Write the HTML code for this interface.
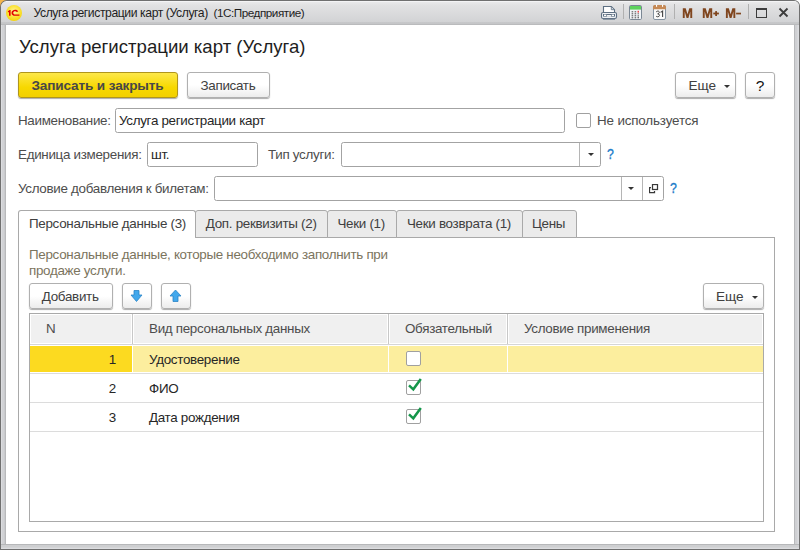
<!DOCTYPE html>
<html><head><meta charset="utf-8">
<style>
*{box-sizing:border-box;margin:0;padding:0}
html,body{width:800px;height:550px;overflow:hidden;background:#fff;font-family:"Liberation Sans",sans-serif;color:#4d4d4d}
div,span{position:absolute}
#corner{left:0;top:0;width:7px;height:7px;background:#f5b54a}
#win{left:0;top:0;width:800px;height:550px;background:#707070;border-radius:7px 6px 0 0}
#frame{left:1px;top:1px;width:798px;height:548px;border-radius:6px 5px 0 0;background:linear-gradient(90deg,#dcdde0 0,#dcdde0 1px,#d1d2d5 1px,#d1d2d5 3px,#c9cacd 3px,#c9cacd 4px,#b8b9bb 4px,#b8b9bb 5px,#fff 5px,#fff 793px,#b8b9bb 793px,#b8b9bb 794px,#cfd0d3 794px,#cfd0d3 796px,#d6d7da 796px,#d6d7da 797px,#dcdde0 797px)}
#title{left:1px;top:1px;width:798px;height:24px;border-radius:6px 5px 0 0;background:linear-gradient(#f4f4f5 0,#f4f4f5 1px,#e9e9ea 1px,#e5e5e6 3px,#e2e2e3 4px,#d2d3d5 21px,#c7c8ca 21px,#c4c5c7 23px,#babbbd 23px,#babbbd 24px)}
#bottom{left:1px;top:544px;width:798px;height:5px;background:linear-gradient(#b7b8ba 0,#b7b8ba 1px,#cecfd1 1px,#cecfd1 3px,#d3d4d6 3px,#d3d4d6 4px,#dcdde0 4px)}
#client{left:6px;top:25px;width:788px;height:519px;background:#fff}
.t{white-space:nowrap;font-size:13.4px;line-height:16px;letter-spacing:-0.3px}
.btn{border:1px solid #b0b0b0;border-radius:3px;background:linear-gradient(#ffffff 50%,#ececec);box-shadow:0 1px 1px rgba(0,0,0,.33);font-size:12.9px;color:#404040;text-align:center;white-space:nowrap}
.inp{border:1px solid #a3a3a3;border-radius:2.5px;background:#fff}
.sep{top:0;bottom:0;width:1px;background:#b5b5b5}
.tri{width:0;height:0;border-left:3px solid transparent;border-right:3px solid transparent;border-top:3.5px solid #333}
.tab{top:210px;height:28px;border:1px solid #a9a9a9;border-radius:3px 3px 0 0;background:#ebebeb}
.hl{height:1px;background:#dcdcdc}
.cb{width:15px;height:15px;border:1px solid #a0a0a0;border-radius:2px;background:#fff}
.q{font-size:14.5px;font-weight:normal;-webkit-text-stroke:0.35px #1d7cc9;color:#1d7cc9;line-height:16px;transform:scaleX(0.85);transform-origin:0 0}
</style></head><body>
<div id="corner"></div>
<div id="win"></div><div id="frame"></div><div id="title"></div><div id="bottom"></div>
<div id="client"></div>

<!-- title bar -->
<div style="left:6px;top:5px;width:16px;height:16px;border-radius:50%;background:radial-gradient(circle at 50% 40%,#fff6a0 0,#fbe33a 45%,#f4cf00 85%,#e0b800 100%)"></div>
<svg style="position:absolute;left:6px;top:5px" width="16" height="16" viewBox="0 0 16 16"><path d="M1.9 6.2 L3.6 5.1 H4.6 V10.8 H3.0 V7.0 L1.9 7.6 Z" fill="#e20000"/><path d="M12.2 6.4 C11.8 5.4 10.6 4.8 9.2 4.8 C7.1 4.8 5.5 6.1 5.5 7.9 C5.5 9.7 7.1 10.8 9.0 10.8 H13.4 V9.4 H9.2 C8.0 9.4 7.2 8.8 7.2 7.9 C7.2 6.9 8.0 6.3 9.2 6.3 C9.9 6.3 10.4 6.5 10.7 7.0 Z" fill="#e20000"/></svg>
<div class="t" style="left:33.5px;top:5px;font-size:12.2px;letter-spacing:-0.42px;color:#1e1e1e">Услуга регистрации карт (Услуга)</div><div class="t" style="left:213.5px;top:5px;font-size:11.7px;letter-spacing:-0.45px;color:#1e1e1e">(1С:Предприятие)</div>

<!-- title icons -->
<svg style="position:absolute;left:600px;top:4px" width="190" height="18" viewBox="0 0 190 18">
  <!-- printer -->
  <path d="M3.5 2.5 H11.3 L14.5 5.7 V8.5 H3.5 Z" fill="#fff" stroke="#5d6f82" stroke-width="1.1"/>
  <path d="M11.3 3 V5.7 H14" fill="#d5dce3" stroke="#5d6f82" stroke-width="0.8"/>
  <rect x="1.5" y="8.5" width="15" height="6" rx="1.6" fill="#eef1f4" stroke="#5d6f82" stroke-width="1.1"/>
  <rect x="3" y="10" width="12" height="2.6" fill="#5d6f82"/>
  <rect x="4" y="10.6" width="2.3" height="1.4" fill="#fff"/><rect x="7" y="11.1" width="4" height="1.5" fill="#fff"/><rect x="11.7" y="10.6" width="2.3" height="1.4" fill="#fff"/>
  <rect x="3" y="14.6" width="12" height="1.1" fill="#6b7c8e"/>
  <!-- separator -->
  <rect x="23" y="-1" width="1" height="16" fill="#b0b0b0"/>
  <!-- calculator -->
  <rect x="29.5" y="1.5" width="12" height="14" rx="1.2" fill="#f1f4f8" stroke="#7b8794" stroke-width="1"/>
  <rect x="30" y="2" width="11" height="3.6" fill="#5dd25d"/>
  <g fill="#4a4a4a">
    <rect x="31.6" y="7.3" width="1.6" height="1"/><rect x="34.6" y="7.3" width="1.6" height="1"/>
    <rect x="31.6" y="9.3" width="1.6" height="1"/><rect x="34.6" y="9.3" width="1.6" height="1"/><rect x="37.6" y="9.3" width="1.2" height="1"/>
    <rect x="31.6" y="11.3" width="1.6" height="1"/><rect x="34.6" y="11.3" width="1.6" height="1"/><rect x="37.6" y="11.3" width="1.2" height="1"/>
    <rect x="31.6" y="13.3" width="1.6" height="1"/><rect x="34.6" y="13.3" width="1.6" height="1"/><rect x="37.6" y="12.8" width="1.2" height="1.5"/>
  </g>
  <rect x="37.6" y="6.8" width="1.2" height="1.8" fill="#ee2222"/>
  <!-- calendar -->
  <rect x="53.5" y="1.5" width="12" height="14" rx="1.5" fill="#fafafa" stroke="#8593a1" stroke-width="1"/>
  <path d="M53 5.3 V3 Q53 1 55 1 H64 Q66 1 66 3 V5.3 Z" fill="#c68a56"/>
  <rect x="56" y="0.6" width="1.1" height="2.2" fill="#fff"/><rect x="62" y="0.6" width="1.1" height="2.2" fill="#fff"/>
  <path d="M56.2 7.9 Q57.2 6.9 58.3 7.1 Q59.4 7.4 59.3 8.5 Q59.1 9.5 57.7 9.8 Q59.6 10.1 59.5 11.4 Q59.3 12.8 57.7 12.8 Q56.6 12.8 56 12" fill="none" stroke="#444" stroke-width="1"/>
  <path d="M60.6 8.4 L62.6 7 V12.9" fill="none" stroke="#444" stroke-width="1.1"/>
  <!-- separator -->
  <rect x="74" y="-1" width="1" height="16" fill="#b0b0b0"/>
  <!-- M M+ M- -->
  <g fill="#80461f">
    <path transform="translate(82.8,4.2)" d="M0 9.8 V0 H2.9 L4.7 6.0 L6.5 0 H9.4 V9.8 H7.5 V3.2 L5.6 9.8 H3.8 L1.9 3.2 V9.8 Z"/>
    <path transform="translate(102.8,4.2)" d="M0 9.8 V0 H2.9 L4.7 6.0 L6.5 0 H9.4 V9.8 H7.5 V3.2 L5.6 9.8 H3.8 L1.9 3.2 V9.8 Z"/>
    <path transform="translate(125.9,4.2)" d="M0 9.8 V0 H2.9 L4.7 6.0 L6.5 0 H9.4 V9.8 H7.5 V3.2 L5.6 9.8 H3.8 L1.9 3.2 V9.8 Z"/>
    <rect x="113.3" y="8.6" width="5.6" height="1.8"/><rect x="115.2" y="7.1" width="1.8" height="4.9"/>
    <rect x="136.1" y="8.7" width="4.9" height="1.7"/>
  </g>
  <!-- separator -->
  <rect x="148" y="-1" width="1" height="16" fill="#b0b0b0"/>
  <!-- maximize -->
  <rect x="156.5" y="4.5" width="10" height="9" fill="none" stroke="#3c3c3c" stroke-width="1"/>
  <rect x="156" y="4" width="11" height="2" fill="#3c3c3c"/>
  <!-- close -->
  <path d="M179.5 4.5 L187.5 12.5 M187.5 4.5 L179.5 12.5" stroke="#3c3c3c" stroke-width="1.8"/>
</svg>

<!-- header -->
<div class="t" style="left:19px;top:36px;font-size:18.6px;line-height:22px;letter-spacing:0;color:#1e1e1e">Услуга регистрации карт (Услуга)</div>

<!-- buttons -->
<div class="btn" style="left:18px;top:72px;width:160px;height:26px;background:linear-gradient(#fde84a,#f7d800 60%,#f2d000);border-color:#b0961c"></div><div class="t" style="left:31.5px;top:78px;font-weight:bold;font-size:13.6px;letter-spacing:-0.15px;color:#484848">Записать и закрыть</div>
<div class="btn" style="left:187px;top:72px;width:83px;height:26px"></div><div class="t" style="left:200.5px;top:78px;color:#404040">Записать</div>
<div class="btn" style="left:675px;top:72px;width:61px;height:26px"><div class="tri" style="left:47.5px;top:12px"></div></div><div class="t" style="left:688.5px;top:78px;color:#404040;font-size:13.6px;letter-spacing:0">Еще</div>
<div class="btn" style="left:745px;top:72px;width:30px;height:26px;line-height:25px;color:#111;font-size:15.5px">?</div>

<!-- row 1 -->
<div class="t" style="left:18px;top:113px">Наименование:</div>
<div class="inp" style="left:115px;top:108px;width:450px;height:25px"></div>
<div class="t" style="left:119px;top:113px;color:#262626">Услуга регистрации карт</div>
<div class="cb" style="left:576px;top:113px"></div>
<div class="t" style="left:597px;top:113px;letter-spacing:-0.15px">Не используется</div>

<!-- row 2 -->
<div class="t" style="left:18px;top:147px">Единица измерения:</div>
<div class="inp" style="left:147px;top:142px;width:111px;height:25px"></div>
<div class="t" style="left:151px;top:147px;color:#262626">шт.</div>
<div class="t" style="left:268px;top:147px">Тип услуги:</div>
<div class="inp" style="left:341px;top:142px;width:260px;height:25px"><div class="sep" style="left:237px"></div><div class="tri" style="left:245.5px;top:10px"></div></div>
<div class="t q" style="left:607px;top:146px">?</div>

<!-- row 3 -->
<div class="t" style="left:18px;top:181px">Условие добавления к билетам:</div>
<div class="inp" style="left:214px;top:176px;width:450px;height:25px"><div class="sep" style="left:406px"></div><div class="tri" style="left:413px;top:10px"></div><div class="sep" style="left:427px"></div>
<svg style="position:absolute;left:434px;top:7px" width="11" height="11" viewBox="0 0 11 11"><path d="M2 3.5 H0.5 V8.5 H5.5 V7" fill="none" stroke="#383838" stroke-width="1.25"/><rect x="3.5" y="0.5" width="5" height="5" fill="none" stroke="#383838" stroke-width="1.25"/></svg>
</div>
<div class="t q" style="left:670px;top:180px">?</div>

<!-- tabs -->
<div style="left:18px;top:237px;width:757px;height:295px;border:1px solid #a9a9a9;background:#fff"></div>
<div class="tab" style="left:18px;width:178px;background:#fff;border-bottom:none;height:28px"></div>
<div class="tab" style="left:195px;width:133px"></div>
<div class="tab" style="left:327px;width:70px"></div>
<div class="tab" style="left:396px;width:127px"></div>
<div class="tab" style="left:522px;width:55px"></div>
<div style="left:19px;top:237px;width:176px;height:2px;background:#fff"></div>
<div class="t" style="left:29px;top:216px;color:#404040">Персональные данные (3)</div>
<div class="t" style="left:205.8px;top:216px;color:#404040">Доп. реквизиты (2)</div>
<div class="t" style="left:337.5px;top:216px;color:#404040">Чеки (1)</div>
<div class="t" style="left:407px;top:216px;color:#404040">Чеки возврата (1)</div>
<div class="t" style="left:532px;top:216px;color:#404040">Цены</div>

<!-- description -->
<div class="t" style="left:29px;top:247px;color:#7b745d;font-size:13.4px;line-height:16px">Персональные данные, которые необходимо заполнить при<br>продаже услуги.</div>

<!-- toolbar -->
<div class="btn" style="left:29px;top:283px;width:84px;height:26px"></div><div class="t" style="left:41.8px;top:289px;color:#404040">Добавить</div>
<div class="btn" style="left:122px;top:283px;width:30px;height:26px">
<svg style="position:absolute;left:7px;top:5px" width="14" height="14" viewBox="0 0 14 14"><path d="M4 1.5 H9 V6 H12 L6.5 12.5 L1 6 H4 Z" fill="#42a8ec" stroke="#2a84c6" stroke-width="0.8" stroke-linejoin="miter"/></svg></div>
<div class="btn" style="left:161px;top:283px;width:30px;height:26px">
<svg style="position:absolute;left:7px;top:5px" width="14" height="14" viewBox="0 0 14 14"><path d="M4 12.5 H9 V7 H12 L6.5 1 L1 7 H4 Z" fill="#42a8ec" stroke="#2a84c6" stroke-width="0.8" stroke-linejoin="miter"/></svg></div>
<div class="btn" style="left:703px;top:283px;width:61px;height:26px"><div class="tri" style="left:47.5px;top:12px"></div></div><div class="t" style="left:716px;top:289px;color:#404040;font-size:13.6px;letter-spacing:0">Еще</div>

<!-- table -->
<div style="left:29px;top:313px;width:735px;height:209px;border:1px solid #a9a9a9;background:#fff;overflow:hidden">
  <div style="left:0;top:0;width:733px;height:30px;background:#f0f0f0;border-bottom:1px solid #d6d6d6"></div>
  <div style="left:0;top:0;width:102px;height:30px;border:1px solid #fff;border-bottom:none"></div>
  <div style="left:103px;top:0;width:255px;height:30px;border:1px solid #fff;border-bottom:none"></div>
  <div style="left:359px;top:0;width:118px;height:30px;border:1px solid #fff;border-bottom:none"></div>
  <div style="left:478px;top:0;width:255px;height:30px;border:1px solid #fff;border-bottom:none"></div>
  <div style="left:0;top:29px;width:733px;height:1px;background:#fff"></div>
  <div style="left:102px;top:0;width:1px;height:30px;background:#c8c8c8"></div>
  <div style="left:358px;top:0;width:1px;height:30px;background:#c8c8c8"></div>
  <div style="left:477px;top:0;width:1px;height:30px;background:#c8c8c8"></div>
  <div style="left:0;top:30px;width:733px;height:1px;background:#d6d6d6"></div>
  <div class="t" style="left:16px;top:7px">N</div>
  <div class="t" style="left:119px;top:7px">Вид персональных данных</div>
  <div class="t" style="left:375px;top:7px">Обязательный</div>
  <div class="t" style="left:494px;top:7px">Условие применения</div>
  <!-- row1 selected -->
  <div style="left:0;top:32px;width:102px;height:26px;background:#fcda20"></div>
  <div style="left:103px;top:32px;width:630px;height:26px;background:#fcee9e"></div>
  <div style="left:358px;top:32px;width:1px;height:26px;background:#fff"></div>
  <div style="left:477px;top:32px;width:1px;height:26px;background:#fff"></div>
  <div class="hl" style="left:0;top:59px;width:733px"></div>
  <div class="hl" style="left:0;top:88px;width:733px"></div>
  <div class="hl" style="left:0;top:117px;width:733px"></div>
  <div class="t" style="left:78px;top:38px;width:8px;text-align:right;color:#262626">1</div>
  <div class="t" style="left:78px;top:67px;width:8px;text-align:right;color:#262626">2</div>
  <div class="t" style="left:78px;top:96px;width:8px;text-align:right;color:#262626">3</div>
  <div class="t" style="left:119px;top:38px;color:#262626">Удостоверение</div>
  <div class="t" style="left:119px;top:67px;color:#262626">ФИО</div>
  <div class="t" style="left:119px;top:96px;color:#262626">Дата рождения</div>
  <div class="cb" style="left:376px;top:37px"></div>
  <div class="cb" style="left:376px;top:66px"></div>
  <div class="cb" style="left:376px;top:95px"></div>
  <svg style="position:absolute;left:377px;top:62px" width="16" height="16" viewBox="0 0 16 16"><path d="M2 9.3 L6.3 13.3 L13.8 3" fill="none" stroke="#15964a" stroke-width="2.5"/></svg>
  <svg style="position:absolute;left:377px;top:91px" width="16" height="16" viewBox="0 0 16 16"><path d="M2 9.3 L6.3 13.3 L13.8 3" fill="none" stroke="#15964a" stroke-width="2.5"/></svg>
</div>
</body></html>
